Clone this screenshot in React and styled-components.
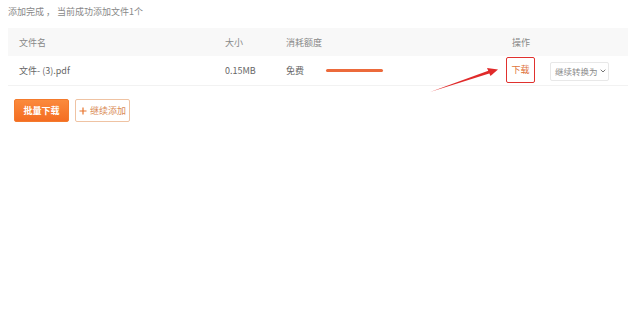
import React from 'react'
import styled, { createGlobalStyle } from 'styled-components'

const GlobalStyle = createGlobalStyle`
  body {
    margin: 0;
    background: #fff;
    font-family: "Noto Sans CJK SC", "Noto Sans", sans-serif;
  }
`

const Page = styled.div`
  position: relative;
  width: 640px;
  height: 322px;
  padding: 5px 8px 0;
  box-sizing: border-box;
`

const Notice = styled.div`
  font-size: 9px;
  line-height: 14px;
  color: #888;
`

const Table = styled.div`
  margin-top: 9px;
  width: 620px;
`

const Row = styled.div`
  display: grid;
  grid-template-columns: 206px 61px 220px 1fr;
  align-items: center;
  padding-left: 11px;
  height: ${p => (p.$head ? '28px' : '29px')};
  background: ${p => (p.$head ? '#f8f8f8' : '#fff')};
  border-bottom: ${p => (p.$head ? 'none' : '1px solid #f2f2f2')};
  font-size: 9px;
  color: ${p => (p.$head ? '#888' : '#666')};
`

const HeadAction = styled.span`
  padding-left: 6px;
`

const Usage = styled.div`
  display: flex;
  align-items: center;
  gap: 22px;
`

const Bar = styled.div`
  width: 57px;
  height: 3px;
  border-radius: 2px;
  background: #ec6a3b;
`

const Actions = styled.div`
  display: flex;
  align-items: center;
  gap: 15px;
  margin-top: -2px;
`

const DownloadLink = styled.div`
  width: 29px;
  height: 26px;
  box-sizing: border-box;
  border: 1.5px solid #e0312e;
  border-radius: 2px;
  display: flex;
  align-items: center;
  justify-content: center;
  color: #e0733c;
  font-size: 9px;
`

const Convert = styled.div`
  display: flex;
  align-items: center;
  gap: 2px;
  height: 19px;
  width: 59px;
  padding-left: 4px;
  box-sizing: border-box;
  border: 1px solid #e8e8e8;
  border-radius: 2px;
  color: #888;
  font-size: 8.5px;
  white-space: nowrap;
  margin-top: 3px;
`

const Buttons = styled.div`
  display: flex;
  gap: 6px;
  margin: 13px 0 0 6px;
`

const Button = styled.div`
  width: 55px;
  height: 23px;
  box-sizing: border-box;
  border-radius: 2px;
  display: flex;
  align-items: center;
  justify-content: center;
  gap: 3px;
  font-size: 9px;
  color: ${p => (p.$primary ? '#fff' : '#d98a55')};
  background: ${p => (p.$primary ? 'linear-gradient(#fb8a3c, #f46d22)' : '#fff')};
  border: 1px solid ${p => (p.$primary ? '#f47a2c' : '#efc3a3')};
  font-weight: ${p => (p.$primary ? 600 : 400)};
`

const Arrow = styled.svg`
  position: absolute;
  left: 0;
  top: 0;
  pointer-events: none;
`

export default function App() {
  return (
    <Page>
      <GlobalStyle />
      <Notice>添加完成 ， 当前成功添加文件1个</Notice>
      <Table>
        <Row $head>
          <span>文件名</span>
          <span>大小</span>
          <span>消耗额度</span>
          <HeadAction>操作</HeadAction>
        </Row>
        <Row>
          <span>文件- (3).pdf</span>
          <span>0.15MB</span>
          <Usage>
            <span>免费</span>
            <Bar />
          </Usage>
          <Actions>
            <DownloadLink>下载</DownloadLink>
            <Convert>
              继续转换为
              <svg width="6" height="4" viewBox="0 0 6 4">
                <path d="M0.7 0.7 L3 3 L5.3 0.7" fill="none" stroke="#777" strokeWidth="1" />
              </svg>
            </Convert>
          </Actions>
        </Row>
      </Table>
      <Buttons>
        <Button $primary>批量下载</Button>
        <Button>
          <svg width="8" height="8" viewBox="0 0 8 8">
            <path d="M4 0.5 V7.5 M0.5 4 H7.5" stroke="#e8742c" strokeWidth="1.2" />
          </svg>
          继续添加
        </Button>
      </Buttons>
      <Arrow width="640" height="322" viewBox="0 0 640 322">
        <path d="M430 92 L490 73.2 L489 70.6 Z" fill="#e02a2a" />
        <path d="M498 69.5 L487 68 L490.5 76 Z" fill="#e02a2a" />
      </Arrow>
    </Page>
  )
}
